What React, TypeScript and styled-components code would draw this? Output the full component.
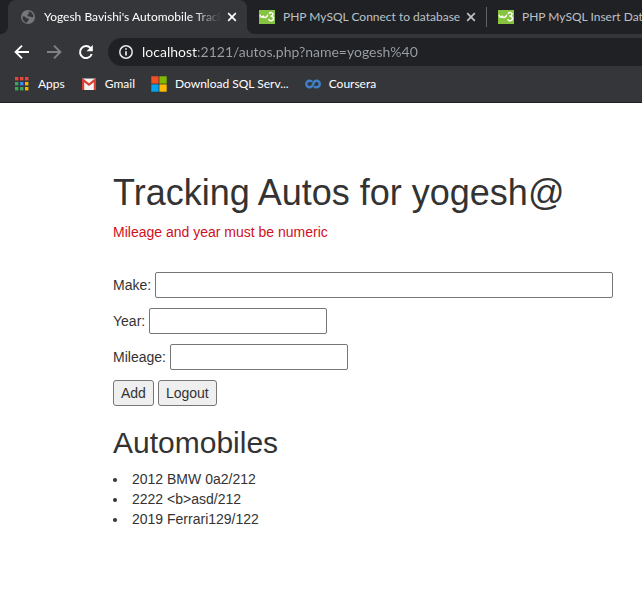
import React from 'react';
import styled, { createGlobalStyle } from 'styled-components';

const GlobalStyle = createGlobalStyle`
  *, *::before, *::after { box-sizing: border-box; }
  body {
    margin: 0;
    background: #fff;
    color: #333;
    font: 14px/20px "Liberation Sans", Arial, sans-serif;
    overflow-x: hidden;
  }
`;

const Chrome = styled.header`
  background: #35363a;
  border-bottom: 1px solid #1f2023;
  color: #fff;
  font: 12px/16px Lato, "Open Sans", sans-serif;
  overflow: hidden;
`;

const TabStrip = styled.div`
  display: flex;
  height: 34px;
  padding-left: 8px;
  background: #202124;
`;

const Tab = styled.div<{ $active?: boolean }>`
  position: relative;
  display: flex;
  flex: none;
  align-items: center;
  gap: 4px;
  width: 239px;
  padding: 0 10px 0 12px;
  border-radius: 8px 8px 0 0;
  background: ${p => (p.$active ? '#35363a' : 'transparent')};
  color: ${p => (p.$active ? '#fff' : '#bdc1c6')};

  &::before, &::after {
    content: ${p => (p.$active ? '""' : 'none')};
    position: absolute;
    bottom: 0;
    width: 8px;
    height: 8px;
  }
  &::before {
    right: 100%;
    background: radial-gradient(circle at 0 0, transparent 8px, #35363a 8px);
  }
  &::after {
    left: 100%;
    background: radial-gradient(circle at 100% 0, transparent 8px, #35363a 8px);
  }
`;

const TabDivider = styled.span`
  flex: none;
  align-self: center;
  width: 1px;
  height: 20px;
  margin-right: -1px;
  background: #5f6368;
`;

const TabTitle = styled.span<{ $faded?: boolean }>`
  flex: 1;
  min-width: 0;
  padding-left: 4px;
  overflow: hidden;
  white-space: nowrap;
  mask-image: ${p => (p.$faded ? 'linear-gradient(to right, #000 calc(100% - 30px), transparent calc(100% - 2px))' : 'none')};
`;

const IconButton = styled.button<{ $size: number }>`
  display: flex;
  flex: none;
  align-items: center;
  justify-content: center;
  width: ${p => p.$size}px;
  height: ${p => p.$size}px;
  padding: 0;
  border: 0;
  background: none;
  color: inherit;

  &:disabled { color: #818286; }
`;

const Toolbar = styled.div`
  display: flex;
  align-items: center;
  gap: 4px;
  height: 36px;
  padding-left: 8px;
`;

const AddressBar = styled.label`
  display: flex;
  flex: 1;
  align-items: center;
  gap: 8px;
  height: 28px;
  margin-left: 4px;
  padding-left: 10px;
  border-radius: 14px 0 0 14px;
  background: #202124;
`;

const AddressInput = styled.input`
  flex: 1;
  min-width: 0;
  padding: 0;
  border: 0;
  outline: 0;
  background: linear-gradient(to right, #fff 55px, #9aa0a6 55px) text;
  color: transparent;
  font: 14px/20px Lato, "Open Sans", sans-serif;
`;

const Bookmarks = styled.nav`
  display: flex;
  align-items: center;
  gap: 16px;
  height: 32px;
  padding: 0 0 4px 14px;
`;

const Bookmark = styled.a`
  display: flex;
  align-items: center;
  gap: 8px;
  color: inherit;
  text-decoration: none;
  white-space: nowrap;
`;

const Page = styled.main`
  padding: 70px 15px 40px 113px;
`;

const Title = styled.h1`
  margin: 0 0 10px;
  font-size: 36px;
  line-height: 39px;
  font-weight: 400;
`;

const ErrorText = styled.p`
  margin: 0 0 30px;
  color: #d0101c;
`;

const Row = styled.div`
  display: flex;
  align-items: center;
  gap: 4px;
  margin-bottom: 10px;
`;

const TextInput = styled.input<{ $wide?: boolean }>`
  width: ${p => (p.$wide ? 458 : 178)}px;
  min-width: 0;
  height: 26px;
  padding: 2px;
  border: 1px solid #767676;
  border-radius: 2px;
  background: #fff;
  color: inherit;
  font: inherit;
`;

const FormButton = styled.button`
  height: 26px;
  padding: 2px 7px;
  border: 1px solid #767676;
  border-radius: 3px;
  background: #efefef;
  color: inherit;
  font: inherit;
`;

const Subtitle = styled.h2`
  margin: 20px 0 10px;
  font-size: 30px;
  line-height: 33px;
  font-weight: 400;
`;

const AutoList = styled.ul`
  margin: 0;
  padding: 0;
  list-style: disc inside;
`;

const GlobeIcon = () => (
  <svg width="16" height="16" viewBox="0 0 16 16" aria-hidden="true">
    <circle cx="8" cy="8" r="7" fill="#75777b" />
    <path d="M2.6 7.2 4.8 7.6 6.6 9.2 8.6 9.6 8.8 11 7.4 12.2 7 13.9 4.4 12.8 2.8 10.6zM8.4 2.4 11 3 12.8 5.2 13.6 7.6 12 8.4 10.2 7.4 8 7.4 7.2 6 9 4.8z" fill="#35363a" />
  </svg>
);

const W3Icon = () => (
  <svg width="16" height="14" viewBox="0 0 16 14" aria-hidden="true">
    <rect width="16" height="14" fill="#86c440" />
    <path d="M1.2 5.2c.2 2.8 2.7 2.8 3 .4.4 2.6 3.2 2.6 4.4-.3M10.4 3.3c1-1.3 4-.8 3.6 1-.2 1.2-1.4 1.8-2.6 1.8 2 0 3.4 1 3.1 2.8-.3 2.2-3.4 2.6-4.6.7" fill="none" stroke="#fff" strokeWidth="1.5" strokeLinecap="round" />
  </svg>
);

const CloseIcon = () => (
  <svg width="10" height="10" viewBox="0 0 10 10" aria-hidden="true">
    <path d="M1.2 1.2 8.8 8.8M8.8 1.2 1.2 8.8" stroke="currentColor" strokeWidth="1.7" />
  </svg>
);

const ArrowIcon = ({ forward }: { forward?: boolean }) => (
  <svg width="16" height="16" viewBox="0 0 16 16" aria-hidden="true">
    <path
      d={forward ? 'M1 8H14M8 1.6 14.4 8 8 14.4' : 'M15 8H2M8 1.6 1.6 8 8 14.4'}
      fill="none" stroke="currentColor" strokeWidth="1.9"
    />
  </svg>
);

const ReloadIcon = () => (
  <svg width="16" height="16" viewBox="0 0 16 16" aria-hidden="true">
    <path d="M12.6 4.2A6 6 0 1 0 13.7 10" fill="none" stroke="currentColor" strokeWidth="2" />
    <path d="M14.8 1V7.3H8.5z" fill="currentColor" />
  </svg>
);

const InfoIcon = () => (
  <svg width="16" height="16" viewBox="0 0 16 16" aria-hidden="true">
    <circle cx="8" cy="8" r="6.2" fill="none" stroke="#e8eaed" strokeWidth="1.5" />
    <path d="M8 7.2V11.6M8 4.2V5.8" stroke="#e8eaed" strokeWidth="1.7" />
  </svg>
);

const APP_COLORS = ['#e8453c', '#e8453c', '#e8453c', '#3aa757', '#4285f4', '#f5b400', '#3aa757', '#3aa757', '#f5b400'];

const AppsIcon = () => (
  <svg width="16" height="16" viewBox="0 0 16 16" aria-hidden="true">
    {APP_COLORS.map((fill, i) => (
      <rect key={i} x={1 + (i % 3) * 5} y={1 + Math.floor(i / 3) * 5} width="3.4" height="3.4" fill={fill} />
    ))}
  </svg>
);

const GmailIcon = () => (
  <svg width="16" height="16" viewBox="0 0 16 16" aria-hidden="true">
    <rect x="1" y="2.5" width="14" height="11.5" rx="1" fill="#f2f2f2" />
    <path d="M1 3.5Q1 2.5 2 2.5L8 7.2 14 2.5Q15 2.5 15 3.5V14H12.8V6.3L8 10 3.2 6.3V14H1z" fill="#d93f35" />
  </svg>
);

const MicrosoftIcon = () => (
  <svg width="16" height="16" viewBox="0 0 16 16" aria-hidden="true">
    <rect x="0.3" y="0.3" width="7.3" height="7.3" fill="#f25022" />
    <rect x="8.4" y="0.3" width="7.3" height="7.3" fill="#7fba00" />
    <rect x="0.3" y="8.4" width="7.3" height="7.3" fill="#00a4ef" />
    <rect x="8.4" y="8.4" width="7.3" height="7.3" fill="#ffb900" />
  </svg>
);

const CourseraIcon = () => (
  <svg width="16" height="16" viewBox="0 0 16 16" aria-hidden="true">
    <path d="M7.2 5.8C6.4 4.9 5.4 4.7 4.6 4.7a3.3 3.3 0 0 0 0 6.6C7 11.3 7.7 9.6 8.2 8S9.7 4.7 11.5 4.7a3.3 3.3 0 0 1 0 6.6C10.4 11.3 9.5 10.9 8.9 10.2" fill="none" stroke="#4080c4" strokeWidth="2.4" />
  </svg>
);

const TABS = [
  { title: "Yogesh Bavishi's Automobile Tracker", active: true, Icon: GlobeIcon },
  { title: 'PHP MySQL Connect to database', active: false, Icon: W3Icon },
  { title: 'PHP MySQL Insert Data', active: false, Icon: W3Icon },
];

const BOOKMARKS = [
  { label: 'Apps', Icon: AppsIcon },
  { label: 'Gmail', Icon: GmailIcon },
  { label: 'Download SQL Serv...', Icon: MicrosoftIcon },
  { label: 'Coursera', Icon: CourseraIcon },
];

const AUTOS = ['2012 BMW 0a2/212', '2222 <b>asd/212', '2019 Ferrari129/122'];

export default function App() {
  return (
    <>
      <GlobalStyle />
      <Chrome>
        <TabStrip>
          {TABS.map(({ title, active, Icon }, i) => (
            <React.Fragment key={title}>
              {i > 1 && <TabDivider />}
              <Tab $active={active}>
                <Icon />
                <TabTitle $faded={active}>{title}</TabTitle>
                <IconButton $size={10} aria-label={`Close ${title}`}><CloseIcon /></IconButton>
              </Tab>
            </React.Fragment>
          ))}
        </TabStrip>
        <Toolbar>
          <IconButton $size={28} aria-label="Back"><ArrowIcon /></IconButton>
          <IconButton $size={28} aria-label="Forward" disabled><ArrowIcon forward /></IconButton>
          <IconButton $size={28} aria-label="Reload"><ReloadIcon /></IconButton>
          <AddressBar>
            <InfoIcon />
            <AddressInput aria-label="Address" defaultValue="localhost:2121/autos.php?name=yogesh%40" />
          </AddressBar>
        </Toolbar>
        <Bookmarks>
          {BOOKMARKS.map(({ label, Icon }) => (
            <Bookmark key={label} href="#"><Icon />{label}</Bookmark>
          ))}
        </Bookmarks>
      </Chrome>
      <Page>
        <Title>Tracking Autos for yogesh@</Title>
        <ErrorText>Mileage and year must be numeric</ErrorText>
        <form onSubmit={e => e.preventDefault()}>
          <Row>
            <label htmlFor="make">Make:</label>
            <TextInput id="make" name="make" $wide />
          </Row>
          <Row>
            <label htmlFor="year">Year:</label>
            <TextInput id="year" name="year" />
          </Row>
          <Row>
            <label htmlFor="mileage">Mileage:</label>
            <TextInput id="mileage" name="mileage" />
          </Row>
          <Row>
            <FormButton type="submit">Add</FormButton>
            <FormButton type="button">Logout</FormButton>
          </Row>
        </form>
        <Subtitle>Automobiles</Subtitle>
        <AutoList>
          {AUTOS.map(auto => <li key={auto}>{auto}</li>)}
        </AutoList>
      </Page>
    </>
  );
}
